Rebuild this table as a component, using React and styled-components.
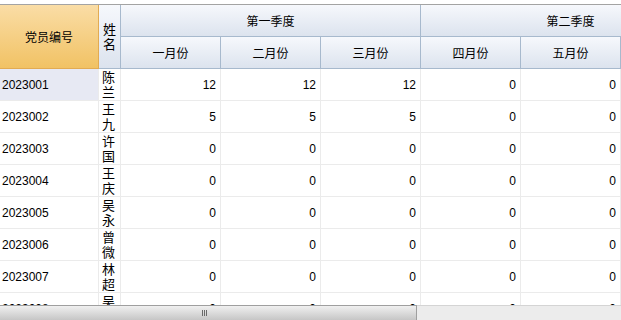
import React from "react";
import styled, { createGlobalStyle } from "styled-components";

const months = ["一月份", "二月份", "三月份", "四月份", "五月份", ""];

const rows = [
  { id: "2023001", name: "陈兰", values: [12, 12, 12, 0, 0] },
  { id: "2023002", name: "王九", values: [5, 5, 5, 0, 0] },
  { id: "2023003", name: "许国", values: [0, 0, 0, 0, 0] },
  { id: "2023004", name: "王庆", values: [0, 0, 0, 0, 0] },
  { id: "2023005", name: "吴永", values: [0, 0, 0, 0, 0] },
  { id: "2023006", name: "曾微", values: [0, 0, 0, 0, 0] },
  { id: "2023007", name: "林超", values: [0, 0, 0, 0, 0] },
  { id: "2023008", name: "吴芳", values: [0, 0, 0, 0, 0] },
];

export default function App() {
  return (
    <>
      <GlobalStyle />
      <Grid>
        <Header>
          <IdHead>党员编号</IdHead>
          <NameHead>姓名</NameHead>
          <QuarterHead>第一季度</QuarterHead>
          <QuarterHead>第二季度</QuarterHead>
          {months.map((m, i) => (
            <MonthHead key={i}>{m}</MonthHead>
          ))}
        </Header>
        <Body>
          {rows.map((r, i) => (
            <Row key={r.id}>
              <IdCell selected={i === 0}>{r.id}</IdCell>
              <NameCell>{r.name}</NameCell>
              {r.values.map((v, j) => (
                <NumCell key={j}>{v}</NumCell>
              ))}
              <NumCell />
            </Row>
          ))}
        </Body>
        <ScrollBar>
          <Thumb>
            <Grip />
          </Thumb>
        </ScrollBar>
      </Grid>
    </>
  );
}

const GlobalStyle = createGlobalStyle`
body {
    margin: 0;
    background: #fff;
    font-family: "Liberation Sans", "Noto Sans CJK SC", sans-serif;
    font-size: 12px;
    color: #000;
}
`;

const COLS = "99px 22px repeat(6, 100px)";

const Grid = styled.div`
  margin-top: 4px;
  height: 316px;
  border-top: 1px solid #a3a3a3;
  display: flex;
  flex-direction: column;
  overflow: hidden;
  box-sizing: border-box;
`;

const Header = styled.div`
  display: grid;
  grid-template-columns: ${COLS};
  grid-template-rows: 32px 32px;
  flex: none;
`;

const HeadCell = styled.div`
  box-sizing: border-box;
  display: flex;
  align-items: center;
  justify-content: center;
  border-right: 1px solid #a7b9cd;
  border-bottom: 1px solid #a7b9cd;
  background: linear-gradient(#f6f8fc, #dce3ee);
  white-space: nowrap;
`;

const IdHead = styled(HeadCell)`
  grid-row: span 2;
  background: linear-gradient(#fadda6, #f1c264);
  border-right-color: #e2ab52;
  border-bottom-color: #e2ab52;
`;

const NameHead = styled(HeadCell)`
  grid-row: span 2;
  white-space: normal;
  line-height: 15px;
  font-size: 13px;
  padding: 0 4px;
  text-align: center;
`;

const QuarterHead = styled(HeadCell)`
  grid-column: span 3;
`;

const MonthHead = styled(HeadCell)``;

const Body = styled.div`
  flex: 1;
  overflow: hidden;
`;

const Row = styled.div`
  display: grid;
  grid-template-columns: ${COLS};
  height: 32px;
`;

const Cell = styled.div`
  box-sizing: border-box;
  display: flex;
  align-items: center;
  border-right: 1px solid #ebebeb;
  border-bottom: 1px solid #ebebeb;
  white-space: nowrap;
`;

const IdCell = styled(Cell)`
  padding-left: 2px;
  background: ${(p) => (p.selected ? "#e7e9f3" : "#fff")};
`;

const NameCell = styled(Cell)`
  border-left: 1px solid #ebebeb;
  margin-left: -1px;
  width: 23px;
  white-space: normal;
  line-height: 15px;
  font-size: 13px;
  padding: 1px 4px 0 3px;
  overflow: hidden;
  align-items: flex-start;
`;

const NumCell = styled(Cell)`
  justify-content: flex-end;
  padding-right: 4px;
`;

const ScrollBar = styled.div`
  flex: none;
  height: 15px;
  box-sizing: border-box;
  background: #ececec;
  border-top: 1px solid #d4d4d4;
`;

const Thumb = styled.div`
  width: 417px;
  height: 15px;
  margin-top: -1px;
  box-sizing: border-box;
  border-top: 1px solid #9f9f9f;
  border-right: 1px solid #9f9f9f;
  background: linear-gradient(#f0f0f0, #c6c6c6);
  display: flex;
  align-items: center;
  justify-content: center;
`;

const Grip = styled.div`
  width: 5px;
  height: 6px;
  background: repeating-linear-gradient(
    90deg,
    #6a6a6a 0 1px,
    transparent 1px 2px
  );
  margin-left: -8px;
`;
